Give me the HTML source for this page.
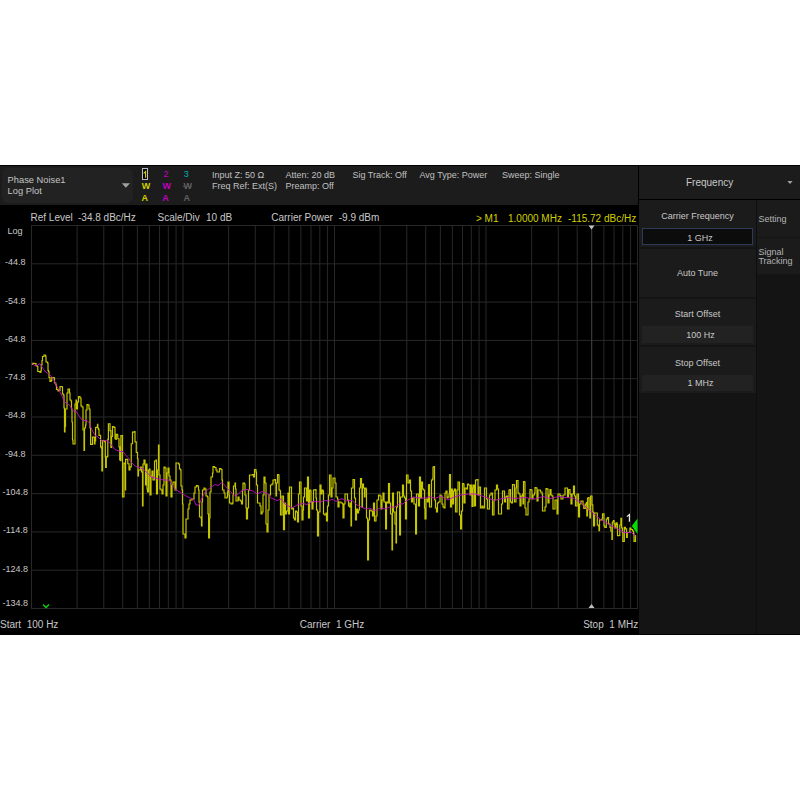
<!DOCTYPE html><html><head><meta charset="utf-8"><style>
html,body{margin:0;padding:0;background:#fff;width:800px;height:800px;overflow:hidden}
.t{position:absolute;white-space:pre;font-family:"Liberation Sans", sans-serif}
.b{position:absolute}
</style></head><body>
<div class="b" style="left:0;top:165px;width:800px;height:470px;background:#000"></div>
<div class="b" style="left:0;top:166px;width:638px;height:39px;background:#1c1c1c"></div>
<div class="b" style="left:2px;top:168px;width:131px;height:35px;background:#222;border-radius:6px"></div>
<div class="t" style="left:7.6px;top:176.13px;font-size:9.3px;line-height:9.3px;color:#c4c4c4;">Phase Noise1</div>
<div class="t" style="left:7.6px;top:186.63px;font-size:9.3px;line-height:9.3px;color:#c4c4c4;">Log Plot</div>
<svg class="b" style="left:121px;top:183px" width="10" height="6"><polygon points="0.75,0.25 9,0.25 4.875,4.75" fill="#a0a0a0"/></svg>
<div class="b" style="left:142px;top:168px;width:4px;height:10px;border:1px solid #b8bcc4;background:#080808"></div>
<svg class="b" style="left:0;top:0" width="800" height="800"><path d="M143.7 173.4 L145.6 171.6 V177.7" stroke="#d0d000" stroke-width="1.15" fill="none"/><path d="M626.9 516.6 L629.4 514.5 V521.7" stroke="#e8e8e8" stroke-width="1.2" fill="none"/></svg>
<div class="t" style="left:163.6px;top:170.18px;font-size:9px;line-height:9px;color:#c000c0;">2</div>
<div class="t" style="left:183.8px;top:170.18px;font-size:9px;line-height:9px;color:#00b0b0;">3</div>
<div class="t" style="left:141.8px;top:181.88px;font-size:9px;line-height:9px;color:#d0d000;font-weight:bold">W</div>
<div class="t" style="left:162.5px;top:181.88px;font-size:9px;line-height:9px;color:#c000c0;font-weight:bold">W</div>
<div class="t" style="left:183.5px;top:181.88px;font-size:9px;line-height:9px;color:#606060;font-weight:bold">W</div>
<div class="t" style="left:141.6px;top:193.68px;font-size:9px;line-height:9px;color:#d0d000;font-weight:bold">A</div>
<div class="t" style="left:162.2px;top:193.68px;font-size:9px;line-height:9px;color:#c000c0;font-weight:bold">A</div>
<div class="t" style="left:183.6px;top:193.68px;font-size:9px;line-height:9px;color:#606060;font-weight:bold">A</div>
<div class="b" style="left:183px;top:186px;width:9px;height:1px;background:#505050"></div>
<div class="t" style="left:212px;top:170.98px;font-size:9px;line-height:9px;color:#c0c0c0;">Input Z: 50 Ω</div>
<div class="t" style="left:212px;top:181.68px;font-size:9px;line-height:9px;color:#c0c0c0;">Freq Ref: Ext(S)</div>
<div class="t" style="left:285.5px;top:170.98px;font-size:9px;line-height:9px;color:#c0c0c0;">Atten: 20 dB</div>
<div class="t" style="left:285.5px;top:181.68px;font-size:9px;line-height:9px;color:#c0c0c0;">Preamp: Off</div>
<div class="t" style="left:352.5px;top:170.98px;font-size:9px;line-height:9px;color:#c0c0c0;">Sig Track: Off</div>
<div class="t" style="left:419.5px;top:170.98px;font-size:9px;line-height:9px;color:#c0c0c0;">Avg Type: Power</div>
<div class="t" style="left:502px;top:170.98px;font-size:9px;line-height:9px;color:#c0c0c0;">Sweep: Single</div>
<div class="t" style="left:30.5px;top:212.84px;font-size:10px;line-height:10px;color:#c8c8c8;">Ref Level</div>
<div class="t" style="left:78px;top:212.84px;font-size:10px;line-height:10px;color:#c8c8c8;">-34.8 dBc/Hz</div>
<div class="t" style="left:157.5px;top:212.84px;font-size:10px;line-height:10px;color:#c8c8c8;">Scale/Div</div>
<div class="t" style="left:206px;top:212.84px;font-size:10px;line-height:10px;color:#c8c8c8;">10 dB</div>
<div class="t" style="left:271.25px;top:212.84px;font-size:10px;line-height:10px;color:#c8c8c8;">Carrier Power</div>
<div class="t" style="left:338.75px;top:212.84px;font-size:10px;line-height:10px;color:#c8c8c8;">-9.9 dBm</div>
<div class="t" style="left:476px;top:214.34px;font-size:10px;line-height:10px;color:#d0d000;">&gt; M1</div>
<div class="t" style="left:508px;top:214.34px;font-size:10px;line-height:10px;color:#d0d000;">1.0000 MHz</div>
<div class="t" style="left:568px;top:214.34px;font-size:10px;line-height:10px;color:#d0d000;">-115.72 dBc/Hz</div>
<svg class="b" style="left:0;top:0" width="800" height="800">
<path d="M31.50 225V609 M77.11 225V609 M103.78 225V609 M122.71 225V609 M137.39 225V609 M149.39 225V609 M159.53 225V609 M168.32 225V609 M176.07 225V609 M183.00 225V609 M228.61 225V609 M255.28 225V609 M274.21 225V609 M288.89 225V609 M300.89 225V609 M311.03 225V609 M319.82 225V609 M327.57 225V609 M334.50 225V609 M380.11 225V609 M406.78 225V609 M425.71 225V609 M440.39 225V609 M452.39 225V609 M462.53 225V609 M471.32 225V609 M479.07 225V609 M486.00 225V609 M531.61 225V609 M558.28 225V609 M577.21 225V609 M591.89 225V609 M603.89 225V609 M614.03 225V609 M622.82 225V609 M630.57 225V609 M637.5 225V609 M31 225.50H638 M31 263.80H638 M31 302.10H638 M31 340.40H638 M31 378.70H638 M31 417.00H638 M31 455.30H638 M31 493.60H638 M31 531.90H638 M31 570.20H638 M31 608.50H638" stroke="#262926" stroke-width="1" fill="none"/><path d="M591.5 229V604" stroke="#363936" stroke-width="1" fill="none"/>
</svg>
<div class="t" style="left:7.5px;top:227.30px;font-size:9.1px;line-height:9.1px;color:#c8c8c8;">Log</div>
<div class="t" style="left:-184.7px;width:400px;text-align:center;top:258.28px;font-size:9px;line-height:9px;color:#c8c8c8;">-44.8</div>
<div class="t" style="left:-184.7px;width:400px;text-align:center;top:296.58px;font-size:9px;line-height:9px;color:#c8c8c8;">-54.8</div>
<div class="t" style="left:-184.7px;width:400px;text-align:center;top:334.88px;font-size:9px;line-height:9px;color:#c8c8c8;">-64.8</div>
<div class="t" style="left:-184.7px;width:400px;text-align:center;top:373.18px;font-size:9px;line-height:9px;color:#c8c8c8;">-74.8</div>
<div class="t" style="left:-184.7px;width:400px;text-align:center;top:411.48px;font-size:9px;line-height:9px;color:#c8c8c8;">-84.8</div>
<div class="t" style="left:-184.7px;width:400px;text-align:center;top:449.78px;font-size:9px;line-height:9px;color:#c8c8c8;">-94.8</div>
<div class="t" style="left:-184.7px;width:400px;text-align:center;top:488.08px;font-size:9px;line-height:9px;color:#c8c8c8;">-104.8</div>
<div class="t" style="left:-184.7px;width:400px;text-align:center;top:526.38px;font-size:9px;line-height:9px;color:#c8c8c8;">-114.8</div>
<div class="t" style="left:-184.7px;width:400px;text-align:center;top:564.68px;font-size:9px;line-height:9px;color:#c8c8c8;">-124.8</div>
<div class="t" style="left:-184.7px;width:400px;text-align:center;top:598.58px;font-size:9px;line-height:9px;color:#c8c8c8;">-134.8</div>
<div class="t" style="left:0px;top:619.53px;font-size:10px;line-height:10px;color:#c8c8c8;">Start  100 Hz</div>
<div class="t" style="left:132px;width:400px;text-align:center;top:619.53px;font-size:10px;line-height:10px;color:#c8c8c8;">Carrier  1 GHz</div>
<div class="t" style="right:161.79999999999995px;top:619.53px;font-size:10px;line-height:10px;color:#c8c8c8;">Stop  1 MHz</div>
<div class="b" style="left:639px;top:166px;width:161px;height:33px;background:#1c1c1c"></div>
<div class="b" style="left:639px;top:200px;width:161px;height:434px;background:#141414"></div>
<div class="b" style="left:639px;top:200px;width:117px;height:47px;background:#1b1b1b"></div>
<div class="b" style="left:639px;top:249px;width:117px;height:48px;background:#1b1b1b"></div>
<div class="b" style="left:639px;top:299px;width:117px;height:46px;background:#1b1b1b"></div>
<div class="b" style="left:639px;top:347px;width:117px;height:46px;background:#1b1b1b"></div>
<div class="b" style="left:756px;top:200px;width:1px;height:434px;background:#0e0e0e"></div>
<div class="b" style="left:757px;top:200px;width:43px;height:37px;background:#1b1b1b"></div>
<div class="b" style="left:757px;top:238px;width:43px;height:36px;background:#1b1b1b"></div>
<div class="b" style="left:642px;top:228px;width:109px;height:15px;background:#0c0c0c;border:1px solid #2c3c58"></div>
<div class="b" style="left:642px;top:326px;width:111px;height:17px;background:#222"></div>
<div class="b" style="left:642px;top:375px;width:111px;height:16px;background:#222"></div>
<svg class="b" style="left:787px;top:180px" width="7" height="5"><polygon points="0.4,0.9 5.6,0.9 3,3.9" fill="#a0a0a0"/></svg>
<div class="t" style="left:686px;top:177.94px;font-size:10px;line-height:10px;color:#c8c8c8;">Frequency</div>
<div class="t" style="left:497.5px;width:400px;text-align:center;top:212.38px;font-size:9px;line-height:9px;color:#c8c8c8;">Carrier Frequency</div>
<div class="t" style="left:500px;width:400px;text-align:center;top:233.68px;font-size:9px;line-height:9px;color:#c8c8c8;">1 GHz</div>
<div class="t" style="left:497.5px;width:400px;text-align:center;top:269.38px;font-size:9px;line-height:9px;color:#c8c8c8;">Auto Tune</div>
<div class="t" style="left:497.5px;width:400px;text-align:center;top:310.38px;font-size:9px;line-height:9px;color:#c8c8c8;">Start Offset</div>
<div class="t" style="left:500.5px;width:400px;text-align:center;top:330.78px;font-size:9px;line-height:9px;color:#c8c8c8;">100 Hz</div>
<div class="t" style="left:497.5px;width:400px;text-align:center;top:359.18px;font-size:9px;line-height:9px;color:#c8c8c8;">Stop Offset</div>
<div class="t" style="left:500.5px;width:400px;text-align:center;top:379.38px;font-size:9px;line-height:9px;color:#c8c8c8;">1 MHz</div>
<div class="t" style="left:758.4px;top:215.18px;font-size:9px;line-height:9px;color:#b4b4b4;">Setting</div>
<div class="t" style="left:758.4px;top:247.68px;font-size:9px;line-height:9px;color:#b4b4b4;">Signal</div>
<div class="t" style="left:758.4px;top:257.18px;font-size:9px;line-height:9px;color:#b4b4b4;">Tracking</div>
<svg class="b" style="left:0;top:0" width="800" height="800"><path d="M31.8 364.5H32.5V363.3H34.5V363.5H36V365.5H37V366.5H37.8V371.5H40V372.5H40.8V371H41.3V365H42V360.5H42.5V356.5H44V355H45.5V356H46V362H47.5V363H48V370.5H48.5V371.5H49V377.5H50V381.5H51.2V380.5H51.8V377.5H54V378H54.5V383H55.8V385H56.5V389.5H58V391H59V390.5H60V386.5H61.8V386.5H62V387H62.5V394H63.5V395H64V408H64.5V432H65V426.5H65.5V409H66.5V409H67V393H68V389H69.5V393H70V400H71V401H71.5V409H72V422H72.5V440H73V444H74.5V444H75V413H75V404H76V400H76.5V409H77.5V402H78.5V396.5H80V398H81V406H82V407H83V430H84V450.5H84.5V428H85.5V425H86V410H87V404.5H88V405H89V409H90V428H90.6V444.4H92.2V444.4H92.5V437.2H93.8V437.2H94.4V444H95V441H95.6V427.5H96.9V427.2H97.5V424.4H97.8V428H98.4V429.4H99V435.3H100.3V435.3H100.6V446.9H101.3V447.8H101.9V471H102.5V440.6H104.4V441.6H105.3V456.9H105.6V467.5H106.3V456.9H107.5V456.3H107.8V439.4H108.4V423.75H109.7V423.75H110V430.6H110.9V431H110.9V447.5H111.6V436.3H112.5V426.6H114V427.5H115V438.75H115.9V439.4H116.25V434.4H117.5V435H117.8V438.75H118.75V438.75H119V446.9H119.7V460H120.6V460.6H120.9V435.6H122.2V435.6H122.5V497H124V463H125V463.75H125.5V490H125.6V459.4H127.2V459.4H127.8V463.75H129V470H130V466.9H131.25V443.75H132.5V432.2H134.4V431.6H135V441.9H136.25V452.5H137.5V458.75H138V476H138.5V470H140.5V467H141.5V472H142.5V506H143V464H144V460H145V465H145.5V485H146.5V464H147V489H147.5V492H148.5V470H149.5V469H150V495H151V476H152V471H153V480H154.5V461H156V460H156.5V494H157.5V470H158.5V445H159V475H160V489H161V490H162V494H163V485H164V467H165V468H166V496H167V473H168V468H169V476H170V480H171V497H172V485H173V482H174V482H175V490H176V463H177.5V463H178.5V464H179.5V469H180.5V470H181V486H182V490H182.5V504H183V534H185V538H186V519H188V509H189V504H190V500H192V499H194V493H195V487H196.5V485.5H197.5V486H198.5V490H199V502H199.5V517H201V518H201.5V526H202V502H202.5V490H204V488H205V489H206V496H207.5V497H208V514H208.6V538H209.5V518H210V492H211V477H212.5V473H213V466.5H214.5V467.5H216V470H217V472H219.5V468.5H221V469.5H222V480H222.5V490H224V493H225V498H227V497H227.5V492H228V482H229V495H229.5V503H231V504H232.5V503H233V495H233.5V486H235V483H235.5V489H236V501H237V501H238V497H239V500H240.5V501H241.5V504H242.5V490H243V483H244.5V484H245V495H246V508H246.5V519H247.5V508H248.5V490H249.5V475H252.5V474.5H253.5V477H254.5V469.5H256V472H256.5V485H257.5V503H260V506H261V514H262V512H263V495H264V477H265V483H266V524H267V532H268V510H269V495H270.5V485H272V484H273V480H274.5V479.5H275.5V483H276V496H276.5V483H277.5V474.5H278.5V475H279V490H280V491H280.5V515H281.5V515H282V496H283V496H283.5V529.6H284.5V503H285.5V514H286.5V511H288V493H288.5V514H289.5V487H291V487H291.5V509H292.5V508H293.5V518H294.5V520H295.5V511H296.5V512H297.5V522H298.5V494H299.5V482H300.5V482H301V506H302V520H303V510H303.5V497H304.5V488H306V488H306.5V501H307.5V477H308.5V477H308.5V518H309.5V490H310.5V491H311V502H312V509H313V502H313.5V490H315V489.5H316V498H316.5V510H317.5V536H318.5V512H320V485H321V494H322V490H323V491H323.5V514H324.5V515H326V513H326.5V521H327.5V506H328.5V495H329.5V475H330.5V475H331V497H332V488H333V478H334V478H335V483H336V497H337.5V499H338V507H339V502H341V503H342.5V504H343V518H344V504H345V494H346.5V494H347.5V500H348.5V506H349.5V507H350V503H351V526H351.5V488H353V479.5H354.5V479.5H354.5V498H355.5V520H356.5V509H357.5V513H358.5V510H359.5V488H360.5V478.5H361.5V484H362V507H362.5V484H363.5V488H364.5V497H365V488H366V489H366.5V518H367.6V560H368.5V520H369.5V510H371V511H372.5V516H373.5V503H374.5V521H376V516H377V500H378.5V495H380V496H381V509H382V500H383V493H384V502H385.6V529H386.5V502H387.5V503H388.5V483.5H389.5V503H390.5V514H392V550H392.5V493H393.5V512H395V524H396V543H396.5V507H397.5V492H398.5V492H399.6V535H400.5V497H402.5V485H403.5V496H404.5V498H405.5V519H406.5V475H407.5V475H408V483H409.5V480H410.5V491H411.5V502H412.5V498H414V504H415.6V534H416.5V494H418V494H418.5V506H419.5V477H420.5V498H421.5V482H422.5V489H423.5V490H424.5V508H425V519H426V499H427.5V502H428.5V485H429V484.5H429.5V507H431V507H431.5V480H432.5V479H433V467H434V466.5H434.5V500H435.5V508H436.5V512H437.5V503H438.5V502H440V495H441V496H442V504H443V507H444V508H445V493H446V491H447V498H448V497H449V494H449.5V474.5H450.5V507H451.5V489H452.5V504H453.5V491H454.5V489H455.5V512H457V490H458V482H459V482H459.5V515H460.6V529H461.5V511H462.5V483.5H463.5V484H464V503H465V488H466.5V489H467.5V484H468.5V485H470V495H471V485H472V506.5H473V488H473.5V485H474.5V506H475.5V480H477V479.5H478V495H479V487H480V487H480.5V508H482V506H483V508H484.5V488H485.5V488H486.5V499H487.5V509H488.5V509H489.5V495H491V493H492.5V515H494V500H495V490H496.5V485H497.5V489H498.5V514H500V514H501.5V504H502.5V491H503.5V491H504.5V502H505.5V497H506.5V496H507.5V509H508.5V509H509V490H510V489.5H510.5V502H511.5V503H512.5V484.5H514V485H514.5V502H515.5V502H516V488H516.5V480.5H517.5V480.5H518V493H519V494H520V506H521V496H522.5V494H523V504H523.5V481.5H524.5V482H525V508H526V515H527V515H528V502H529V499H530V489.5H531V490H532V499H533V495H534.5V493H535V487.5H536V488H537V501H538V490H539.5V490H540.5V492H542V494H542.5V511H544V511H545V507H546V488.5H547V489H548V503H549V495H550V489.5H551V495H552V496H553V509H554V509H555V500H556V500H557V514H558V494H560V495.5H561V499H563V495H565V488H566.5V488H567.5V497H568.5V489.5H570V494H571V504H572V494H573.5V486H574.5V496H575.5V506H577V494H578V494H578.5V517H579.5V504H581V501H583V505H583.8V508.5H584.9V508.5H585.3V504H586.4V502.5H586.8V516H587.5V516H587.5V498H588.6V497.6H589V510H589.8V518H590.5V496H591.6V496H592V504.8H592.8V512H593.5V525.8H594.6V513H596.9V513H597.3V525H598.4V525.8H599V530.6H599.5V519.8H601.8V519H602.5V513.8H603.6V513.8H604V525.8H604.8V527.3H606.3V519H607.4V517.5H608.5V524H610V527.3H610.8V531H611.9V539.4H612.3V522H613.4V520.5H614.1V524H614.9V528H616V522.8H617.1V524.3H617.5V535.6H619V535.5H619.8V525H620.9V518.3H621.6V528H622.4V532.5H622.8V541.3H624.3V527.3H625.4V528.8H626.6V537.5H627.3V532.5H628.8V532.5H629.9V528H631V529.5H632.5V531H633.6V534H634V541.3H635.5V535.5H635.6V537" stroke="#c6c600" stroke-width="1.2" fill="none" stroke-linejoin="miter"/><path d="M32 363.5 L34 365 L36 366 L37 365.5 L40 363.5 L42 367 L45.5 372 L48 373.5 L51 376 L54 380 L56 385 L59 390 L62 396 L64.5 402 L68 404 L70 405.5 L73 411 L76 411 L79 416 L83 421 L86 420 L89 422.5 L91 428 L95 435.5 L98 437 L102 441 L106 440.5 L109 442 L112 446 L115 449.5 L120 451.5 L123 451.5 L126 455.5 L129 458.5 L131 462 L135 466 L139 467.5 L143 469 L147 472.5 L151 477 L155 478 L160 479.5 L165 480 L169 480 L172 485 L176 490 L180 492 L186 496 L190 498 L194 500 L196 505 L199 505 L201 500 L205 492 L210 488 L215 484.5 L218 485.5 L222 482.5 L227 488 L235 496.5 L243 490 L247 489.5 L253 491 L257 494 L262 491.5 L268 494 L271 498 L277 500.5 L281 499 L285 504 L292 508 L298 504.5 L303 503.5 L307 504.5 L312 501.5 L321 502 L324 500.5 L329 501 L332 499 L336 501.5 L342 498.5 L346 501 L352 500.5 L357 505 L361 507 L366 509 L370 508 L375 511 L380 508 L385 509 L390 507 L395 507 L399 504 L403 504 L406 501 L410 499 L413 497 L420 498 L426 498 L430 496.5 L435 498.5 L441 496 L448 500 L454 497 L461 495 L468 494 L475 494 L482 496 L488 498 L494 500.5 L500 499 L508 497.5 L515 498.5 L525 497.5 L535 499 L543 496.5 L550 498.5 L559 496.5 L565 497.5 L573 498 L581 502.5 L588.4 509.5 L600.6 519.4 L609.4 524.6 L624.25 532.5 L631.25 532.5 L635.6 536" stroke="#c010c8" stroke-width="0.9" fill="none"/><polygon points="631.8,526 637.5,518.5 637.5,534" fill="#00e000"/><polygon points="588.5,225.5 594.5,225.5 591.5,229.5" fill="#c0c0c0"/><polygon points="588.5,608 594.5,608 591.5,604" fill="#c0c0c0"/><path d="M43 604.5 L46 607.5 L49 604.5" stroke="#00e000" stroke-width="1.3" fill="none"/></svg>
</body></html>
